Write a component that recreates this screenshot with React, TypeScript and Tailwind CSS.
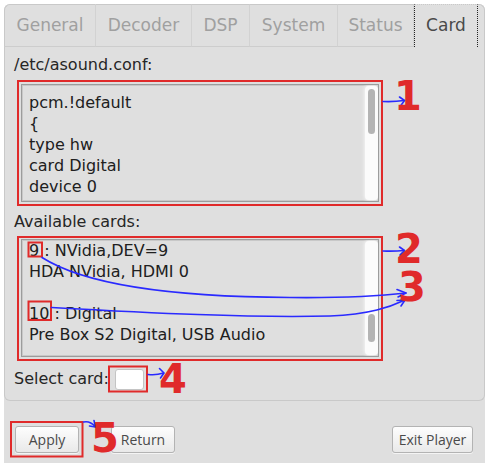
import React from 'react';

const TABS: { label: string; w: string }[] = [
  { label: 'General', w: 'w-[92px]' },
  { label: 'Decoder', w: 'w-[96px]' },
  { label: 'DSP', w: 'w-[58px]' },
  { label: 'System', w: 'w-[88px]' },
  { label: 'Status', w: 'w-[76px]' },
  { label: 'Card', w: 'w-[64px]' },
];
const CONF_LINES = ['pcm.!default', '{', 'type hw', 'card Digital', 'device 0'];
const CARD_LINES = ['9 : NVidia,DEV=9', 'HDA NVidia, HDMI 0', '\u00a0', '10 : Digital', 'Pre Box S2 Digital, USB Audio'];

const ScrollTrack: React.FC<{ thumb: string }> = ({ thumb }) => (
  <div className="w-[13px] my-[1px] rounded-[4px] bg-[#fbfbfb] shadow-[0_0_3px_1px_#f2f2f2] flex flex-col items-center">
    <div className={`w-[7px] rounded-full bg-[#b4b4b4] ${thumb}`} />
  </div>
);

const TextBox: React.FC<{ lines: string[]; pad: string; thumb: string }> = ({ lines, pad, thumb }) => (
  <div className="ml-[7px] w-[358px] h-[118px] border border-[#9c9c9c] shadow-[inset_0_0_0_1px_#c8c8c8] bg-[#dfdfdf] flex overflow-hidden">
    <div className={`flex-1 pl-[7px] text-[16px] leading-[21px] text-[#202020] ${pad}`}>
      {lines.map((l, i) => (
        <div key={i} className="whitespace-pre">{l}</div>
      ))}
    </div>
    <ScrollTrack thumb={thumb} />
  </div>
);

const Button: React.FC<{ label: string; w: string }> = ({ label, w }) => (
  <button
    className={`h-[27px] ${w} rounded-[3px] border border-[#b3b3b3] bg-gradient-to-b from-[#fdfdfd] to-[#e9e9e9] shadow-[0_1px_0_#f4f4f4] text-[14px] text-[#4a4a4a] flex items-center justify-center`}
    style={{ fontFamily: '"Open Sans", "Noto Sans", sans-serif' }}
  >
    {label}
  </button>
);

const Num: React.FC<{ n: string; pos: string }> = ({ n, pos }) => (
  <div className={`absolute ${pos} text-[40px] leading-[30px] font-bold text-[#e02a2a]`}>{n}</div>
);

const App: React.FC = () => {
  return (
    <div
      className="relative w-[491px] h-[467px] bg-white overflow-hidden"
      style={{ fontFamily: '"DejaVu Sans", "Liberation Sans", sans-serif' }}
    >
      <div className="absolute left-[4px] top-[4px] w-[481px] h-[459px] bg-[#dfdfdf] rounded-tl-[6px] rounded-tr-[6px] flex flex-col">
        {/* tabs */}
        <div className="h-[43px] flex">
          {TABS.map((t, i) => {
            const active = t.label === 'Card';
            return (
              <div
                key={t.label}
                className={`h-full ${t.w} flex items-center justify-center text-[17px] border-t border-t-[#c9c9c9] ${
                  i === 0 ? 'border-l border-l-[#c9c9c9] rounded-tl-[6px]' : ''
                } ${
                  active
                    ? 'text-[#4a4a4a] border-x border-x-[#222] border-dotted'
                    : 'text-[#a0a0a0] border-b border-b-[#cdcdcd] border-r border-r-[#d2d2d2]'
                }`}
              >
                {t.label}
              </div>
            );
          })}
          <div className="flex-1 border-t border-r border-[#c9c9c9] rounded-tr-[6px]" />
        </div>

        {/* panel */}
        <div className="h-[354px] border-x border-b border-[#c9c9c9] rounded-b-[6px] pl-[9px] pt-[7px] flex flex-col">
          <div className="text-[16px] leading-[21px] text-[#262626]">/etc/asound.conf:</div>
          <div className="mt-[9px]">
            <TextBox lines={CONF_LINES} pad="pt-[7px]" thumb="mt-[3px] h-[45px]" />
          </div>
          <div className="mt-[9px] text-[16px] leading-[21px] text-[#262626]">Available cards:</div>
          <div className="mt-[7px]">
            <TextBox lines={CARD_LINES} pad="pt-0" thumb="mt-[73px] h-[28px]" />
          </div>
          <div className="mt-[10px] flex items-center text-[16px] leading-[21px] text-[#262626]">
            <span>Select card:</span>
            <div className="ml-[6px] mt-[2px] w-[29px] h-[21px] rounded-[3px] border border-[#c4c4c4] bg-white" />
          </div>
        </div>

        {/* buttons */}
        <div className="mt-[25px] flex pl-[11px] pr-[12px]">
          <Button label="Apply" w="w-[64px]" />
          <div className="ml-[32px]">
            <Button label="Return" w="w-[64px]" />
          </div>
          <div className="flex-1" />
          <Button label="Exit Player" w="w-[81px]" />
        </div>
      </div>

      {/* annotations */}
      <svg className="absolute inset-0 pointer-events-none" width="491" height="467" viewBox="0 0 491 467">
        <g fill="none" stroke="#e02a2a" strokeWidth="2">
          <rect x="18" y="81" width="364" height="124" />
          <rect x="18" y="237" width="364" height="123" />
          <rect x="28.5" y="242.5" width="13.5" height="14" />
          <rect x="28.5" y="301.5" width="22.5" height="18.5" />
          <rect x="109" y="366.5" width="38" height="25" />
          <rect x="11" y="422" width="71.5" height="34.5" />
        </g>
        <g fill="none" stroke="#2a2aff" strokeWidth="1.6" strokeLinecap="round" strokeLinejoin="round">
          <path d="M383,101.5 Q394,102 404,100.5" />
          <path d="M399.5,97 L404.5,100.5 L400.5,106" />
          <path d="M383,251 Q394,251.5 404,250.5" />
          <path d="M399.5,247 L404.5,250.5 L400,255" />
          <path d="M42,257.5 C90,288 190,297 290,297.5 C340,298 380,296 406,293" />
          <path d="M397,289.5 L406,293 L398,297" />
          <path d="M51.5,307.5 C150,313 250,318 330,316 C370,314.5 390,307 405,300" />
          <path d="M397,300.5 L405,300 L401,306" />
          <path d="M148,374.5 Q156,375.5 163.5,373" />
          <path d="M159.5,368.5 L164,373 L160.5,378" />
          <path d="M83.5,422 Q90,420.5 95,426.5" />
          <path d="M94,420.5 L95.5,427 L89.5,426" />
        </g>
      </svg>
      <Num n="1" pos="left-[394px] top-[81px]" />
      <Num n="2" pos="left-[395px] top-[234px]" />
      <Num n="3" pos="left-[398px] top-[272px]" />
      <Num n="4" pos="left-[159px] top-[364px]" />
      <Num n="5" pos="left-[91px] top-[423px]" />
    </div>
  );
};

export default App;
